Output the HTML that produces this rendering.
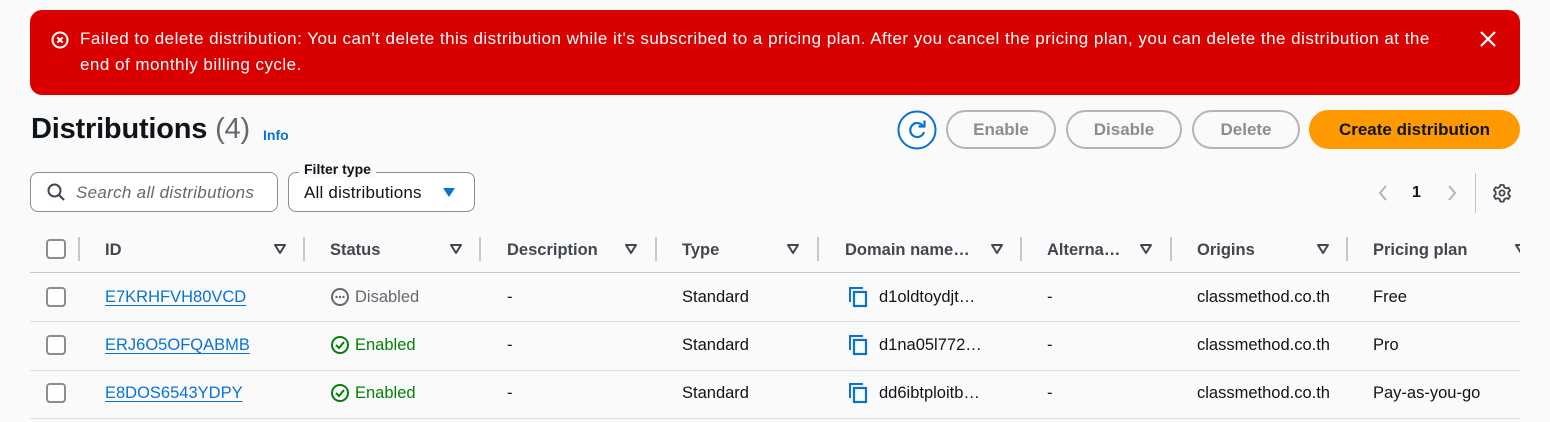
<!DOCTYPE html>
<html><head><meta charset="utf-8"><style>
*{box-sizing:border-box;margin:0;padding:0}
body{width:1550px;height:422px;overflow:hidden;background:#fafafa;font-family:"Liberation Sans",sans-serif;color:#0f141a;position:relative}
.a{position:absolute;white-space:nowrap}
.banner{left:30px;top:10px;width:1490px;height:85px;background:#db0000;border-radius:12px;color:#fff;font-size:17px;line-height:26px;letter-spacing:0.48px}
.btn{position:absolute;top:110px;height:39px;border:2px solid #b4b4bb;border-radius:20px;color:#8c8c94;font-weight:bold;font-size:17px;display:flex;align-items:center;justify-content:center;background:#fafafa}
.hd{font-weight:bold;font-size:16.5px;color:#424650;top:241px}
.sep{top:237px;width:2px;height:24px;background:#c6c6cd}
.tri{top:243px}
.hl{left:30px;width:1490px;height:1px;background:#c6c6cd}
.cell{font-size:16.5px}
.cb{left:46px;width:20px;height:20px;border:2px solid #8c8c94;border-radius:4px;background:#fff}
.lnk{color:#0972d3;text-decoration:underline;text-underline-offset:3px}
</style></head><body>
<div class="a banner">
 <svg class="a" style="left:20px;top:20px" width="20" height="20" viewBox="0 0 20 20"><circle cx="10" cy="10" r="7.5" fill="none" stroke="#fff" stroke-width="2"/><path d="M7.3 7.3l5.4 5.4M12.7 7.3l-5.4 5.4" stroke="#fff" stroke-width="2"/></svg>
 <div class="a" style="left:50px;top:16px">Failed to delete distribution: You can't delete this distribution while it's subscribed to a pricing plan. After you cancel the pricing plan, you can delete the distribution at the<br>end of monthly billing cycle.</div>
 <svg class="a" style="left:1448px;top:19px" width="20" height="20" viewBox="0 0 20 20"><path d="M3 3l14 14M17 3L3 17" stroke="#fff" stroke-width="2.2"/></svg>
</div>
<div class="a" style="left:31px;top:113px;font-size:29px;font-weight:bold;letter-spacing:-0.2px">Distributions <span style="font-weight:normal;color:#656871">(4)</span></div>
<div class="a" style="left:263px;top:127px;font-size:14px;font-weight:bold;color:#0972d3">Info</div>
<svg class="a" style="left:897px;top:110px" width="40" height="40" viewBox="0 0 40 40"><circle cx="20" cy="20" r="18.5" fill="#fff" stroke="#0972d3" stroke-width="2"/><path d="M26 16a7 7 0 1 0 1 6" fill="none" stroke="#0972d3" stroke-width="2.2"/><path d="M27.5 10.5v6h-6" fill="none" stroke="#0972d3" stroke-width="2.2"/></svg>
<div class="btn" style="left:946px;width:110px">Enable</div>
<div class="btn" style="left:1066px;width:116px">Disable</div>
<div class="btn" style="left:1192px;width:108px">Delete</div>
<div class="btn" style="left:1309px;width:211px;background:#ff9900;border-color:#ff9900;color:#0f141a">Create distribution</div>
<div class="a" style="left:30px;top:172px;width:248px;height:40px;border:1px solid #8c8c94;border-radius:8px;background:#fff"></div>
<svg class="a" style="left:46px;top:182px" width="20" height="20" viewBox="0 0 20 20"><circle cx="8.5" cy="8.5" r="6" fill="none" stroke="#424650" stroke-width="2"/><path d="M13 13l5 5" stroke="#424650" stroke-width="2.2"/></svg>
<div class="a" style="left:76px;top:183px;font-size:17px;font-style:italic;color:#656871;letter-spacing:0.3px">Search all distributions</div>
<div class="a" style="left:288px;top:172px;width:187px;height:40px;border:1px solid #8c8c94;border-radius:8px;background:#fff"></div>
<div class="a" style="left:299px;top:160px;padding:0 5px;font-size:14px;font-weight:bold;background:#fafafa;line-height:18px">Filter type</div>
<div class="a" style="left:304px;top:183px;font-size:17px;letter-spacing:0.2px">All distributions</div>
<svg class="a" style="left:441px;top:185px" width="16" height="14"><path d="M2 3h12L8 12z" fill="#0972d3"/></svg>
<svg class="a" style="left:1375px;top:183px" width="16" height="20"><path d="M11 3L5 10l6 7" fill="none" stroke="#b4b4bb" stroke-width="2"/></svg>
<div class="a" style="left:1412px;top:184px;font-size:16px;font-weight:bold">1</div>
<svg class="a" style="left:1444px;top:183px" width="16" height="20"><path d="M5 3l6 7-6 7" fill="none" stroke="#b4b4bb" stroke-width="2"/></svg>
<div class="a" style="left:1475px;top:173px;width:1px;height:40px;background:#c6c6cd"></div>
<svg class="a" style="left:1492px;top:183px" width="20" height="20" viewBox="0 0 20 20"><path d="M8.3 2h3.4l.5 2.3 1.9 1.1 2.3-.7 1.7 2.9-1.8 1.6v2.2l1.8 1.6-1.7 2.9-2.3-.7-1.9 1.1-.5 2.3H8.3l-.5-2.3-1.9-1.1-2.3.7-1.7-2.9 1.8-1.6V8.8L1.9 7.2l1.7-2.9 2.3.7 1.9-1.1z" fill="none" stroke="#424650" stroke-width="1.8" stroke-linejoin="round"/><circle cx="10" cy="10" r="2.6" fill="none" stroke="#424650" stroke-width="1.8"/></svg>
<div style="position:absolute;left:0;top:0;width:1520px;height:422px;overflow:hidden">
<div class="a cb" style="top:239px"></div>
<div class="a sep" style="left:78px"></div>
<div class="a hd" style="left:105px">ID</div><svg class="a tri" style="left:273px" width="14" height="12"><path d="M2 2h10L7 10z" fill="none" stroke="#424650" stroke-width="2" stroke-linejoin="round"/></svg><div class="a sep" style="left:303px"></div>
<div class="a hd" style="left:330px">Status</div><svg class="a tri" style="left:449px" width="14" height="12"><path d="M2 2h10L7 10z" fill="none" stroke="#424650" stroke-width="2" stroke-linejoin="round"/></svg><div class="a sep" style="left:479px"></div>
<div class="a hd" style="left:507px">Description</div><svg class="a tri" style="left:624px" width="14" height="12"><path d="M2 2h10L7 10z" fill="none" stroke="#424650" stroke-width="2" stroke-linejoin="round"/></svg><div class="a sep" style="left:655px"></div>
<div class="a hd" style="left:682px">Type</div><svg class="a tri" style="left:786px" width="14" height="12"><path d="M2 2h10L7 10z" fill="none" stroke="#424650" stroke-width="2" stroke-linejoin="round"/></svg><div class="a sep" style="left:817px"></div>
<div class="a hd" style="left:845px">Domain name…</div><svg class="a tri" style="left:990px" width="14" height="12"><path d="M2 2h10L7 10z" fill="none" stroke="#424650" stroke-width="2" stroke-linejoin="round"/></svg><div class="a sep" style="left:1020px"></div>
<div class="a hd" style="left:1047px">Alterna…</div><svg class="a tri" style="left:1139px" width="14" height="12"><path d="M2 2h10L7 10z" fill="none" stroke="#424650" stroke-width="2" stroke-linejoin="round"/></svg><div class="a sep" style="left:1170px"></div>
<div class="a hd" style="left:1197px">Origins</div><svg class="a tri" style="left:1316px" width="14" height="12"><path d="M2 2h10L7 10z" fill="none" stroke="#424650" stroke-width="2" stroke-linejoin="round"/></svg><div class="a sep" style="left:1346px"></div>
<div class="a hd" style="left:1373px">Pricing plan</div><svg class="a tri" style="left:1514px" width="14" height="12"><path d="M2 2h10L7 10z" fill="none" stroke="#424650" stroke-width="2" stroke-linejoin="round"/></svg>
<div class="a hl" style="top:272px"></div>
<div class="a hl" style="top:321px;background:#e0e0e4"></div>
<div class="a hl" style="top:370px;background:#e0e0e4"></div>
<div class="a hl" style="top:418px;background:#e0e0e4"></div>

<div class="a cb" style="top:287px"></div>
<div class="a cell lnk" style="left:105px;top:288px">E7KRHFVH80VCD</div>
<svg class="a" style="left:330px;top:287px" width="20" height="20" viewBox="0 0 20 20"><circle cx="10" cy="10" r="8" fill="none" stroke="#656871" stroke-width="2"/><circle cx="6.5" cy="10" r="1.2" fill="#656871"/><circle cx="10" cy="10" r="1.2" fill="#656871"/><circle cx="13.5" cy="10" r="1.2" fill="#656871"/></svg>
<div class="a cell" style="left:355px;top:288px;color:#656871">Disabled</div>
<div class="a cell" style="left:507px;top:288px">-</div>
<div class="a cell" style="left:682px;top:288px">Standard</div>
<svg class="a" style="left:848px;top:286px" width="20" height="22" viewBox="0 0 20 22"><path d="M2 16V2h13" fill="none" stroke="#0972d3" stroke-width="2"/><rect x="6" y="6" width="12" height="14" fill="none" stroke="#0972d3" stroke-width="2.2"/></svg>
<div class="a cell" style="left:879px;top:288px">d1oldtoydjt…</div>
<div class="a cell" style="left:1047px;top:288px">-</div>
<div class="a cell" style="left:1197px;top:288px">classmethod.co.th</div>
<div class="a cell" style="left:1373px;top:288px">Free</div>

<div class="a cb" style="top:335px"></div>
<div class="a cell lnk" style="left:105px;top:336px">ERJ6O5OFQABMB</div>
<svg class="a" style="left:330px;top:335px" width="20" height="20" viewBox="0 0 20 20"><circle cx="10" cy="10" r="8" fill="none" stroke="#037f0c" stroke-width="2"/><path d="M6 10l3 3 5-6" fill="none" stroke="#037f0c" stroke-width="2"/></svg>
<div class="a cell" style="left:355px;top:336px;color:#037f0c">Enabled</div>
<div class="a cell" style="left:507px;top:336px">-</div>
<div class="a cell" style="left:682px;top:336px">Standard</div>
<svg class="a" style="left:848px;top:334px" width="20" height="22" viewBox="0 0 20 22"><path d="M2 16V2h13" fill="none" stroke="#0972d3" stroke-width="2"/><rect x="6" y="6" width="12" height="14" fill="none" stroke="#0972d3" stroke-width="2.2"/></svg>
<div class="a cell" style="left:879px;top:336px">d1na05l772…</div>
<div class="a cell" style="left:1047px;top:336px">-</div>
<div class="a cell" style="left:1197px;top:336px">classmethod.co.th</div>
<div class="a cell" style="left:1373px;top:336px">Pro</div>

<div class="a cb" style="top:383px"></div>
<div class="a cell lnk" style="left:105px;top:384px">E8DOS6543YDPY</div>
<svg class="a" style="left:330px;top:383px" width="20" height="20" viewBox="0 0 20 20"><circle cx="10" cy="10" r="8" fill="none" stroke="#037f0c" stroke-width="2"/><path d="M6 10l3 3 5-6" fill="none" stroke="#037f0c" stroke-width="2"/></svg>
<div class="a cell" style="left:355px;top:384px;color:#037f0c">Enabled</div>
<div class="a cell" style="left:507px;top:384px">-</div>
<div class="a cell" style="left:682px;top:384px">Standard</div>
<svg class="a" style="left:848px;top:382px" width="20" height="22" viewBox="0 0 20 22"><path d="M2 16V2h13" fill="none" stroke="#0972d3" stroke-width="2"/><rect x="6" y="6" width="12" height="14" fill="none" stroke="#0972d3" stroke-width="2.2"/></svg>
<div class="a cell" style="left:879px;top:384px">dd6ibtploitb…</div>
<div class="a cell" style="left:1047px;top:384px">-</div>
<div class="a cell" style="left:1197px;top:384px">classmethod.co.th</div>
<div class="a cell" style="left:1373px;top:384px">Pay-as-you-go</div>
</div>
</body></html>
